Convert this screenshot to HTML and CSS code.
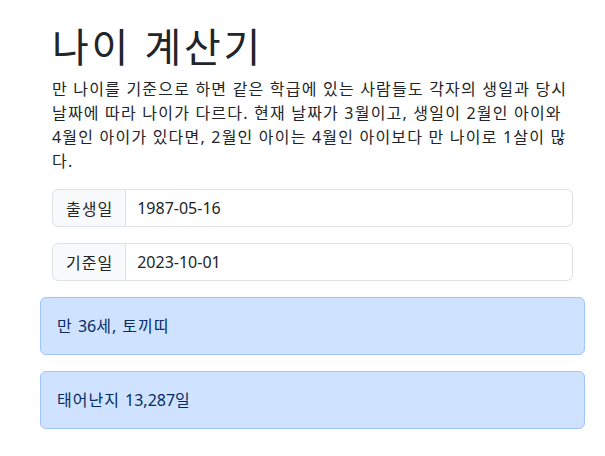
FILE: index.html
```html
<!DOCTYPE html>
<html lang="ko">
<head>
<meta charset="utf-8">
<link rel="stylesheet" href="styles.css">
</head>
<body>
<main class="page">
  <section class="inner">
    <h1 class="title">나이 계산기</h1>
    <p class="lead">만 나이를 기준으로 하면 같은 학급에 있는 사람들도 각자의 생일과 당시 날짜에 따라 나이가 다르다. 현재 날짜가 3월이고, 생일이 2월인 아이와 4월인 아이가 있다면, 2월인 아이는 4월인 아이보다 만 나이로 1살이 많다.</p>
    <div class="input-group">
      <span class="addon">출생일</span>
      <span class="field">1987-05-16</span>
    </div>
    <div class="input-group">
      <span class="addon">기준일</span>
      <span class="field">2023-10-01</span>
    </div>
  </section>
  <div class="alert">만 <span class="num">36</span>세, 토끼띠</div>
  <div class="alert">태어난지 <span class="num">13,287</span>일</div>
</main>
</body>
</html>
```
FILE: styles.css
```css
* { box-sizing: border-box; }
html, body { margin: 0; padding: 0; background: #fff; }
body {
  font-family: "Noto Sans", "Noto Sans CJK KR", sans-serif;
  font-size: 16px;
  line-height: 24px;
  color: #212529;
}
.page {
  width: 545px;
  margin-left: 40px;
  padding-top: 21px;
}
.inner {
  padding: 0 12px;
}
.title {
  margin: 0 0 8px;
  font-size: 40px;
  line-height: 48px;
  font-weight: 400;
  letter-spacing: 0.065em;
  font-family: "Noto Sans CJK KR", sans-serif;
}
.lead {
  margin: 0 0 16px;
  letter-spacing: 1.2px;
}
.input-group {
  display: flex;
  height: 38px;
  margin-bottom: 16px;
}
.addon {
  display: flex;
  align-items: center;
  padding: 0 12px 0 13px;
  background: #f8f9fa;
  border: 1px solid #dee2e6;
  border-radius: 6px 0 0 6px;
  letter-spacing: 1px;
  font-family: "Noto Sans CJK KR", sans-serif;
}
.field {
  flex: 1;
  display: flex;
  align-items: center;
  padding: 0 12px 0 11px;
  border: 1px solid #dee2e6;
  border-left: none;
  border-radius: 0 6px 6px 0;
}
.alert {
  padding: 16px;
  border: 1px solid #9ec5fe;
  background: #cfe2ff;
  color: #052c65;
  border-radius: 6px;
  margin-bottom: 16px;
  height: 58px;
  letter-spacing: 1px;
}
.num {
  letter-spacing: 0;
}
```
